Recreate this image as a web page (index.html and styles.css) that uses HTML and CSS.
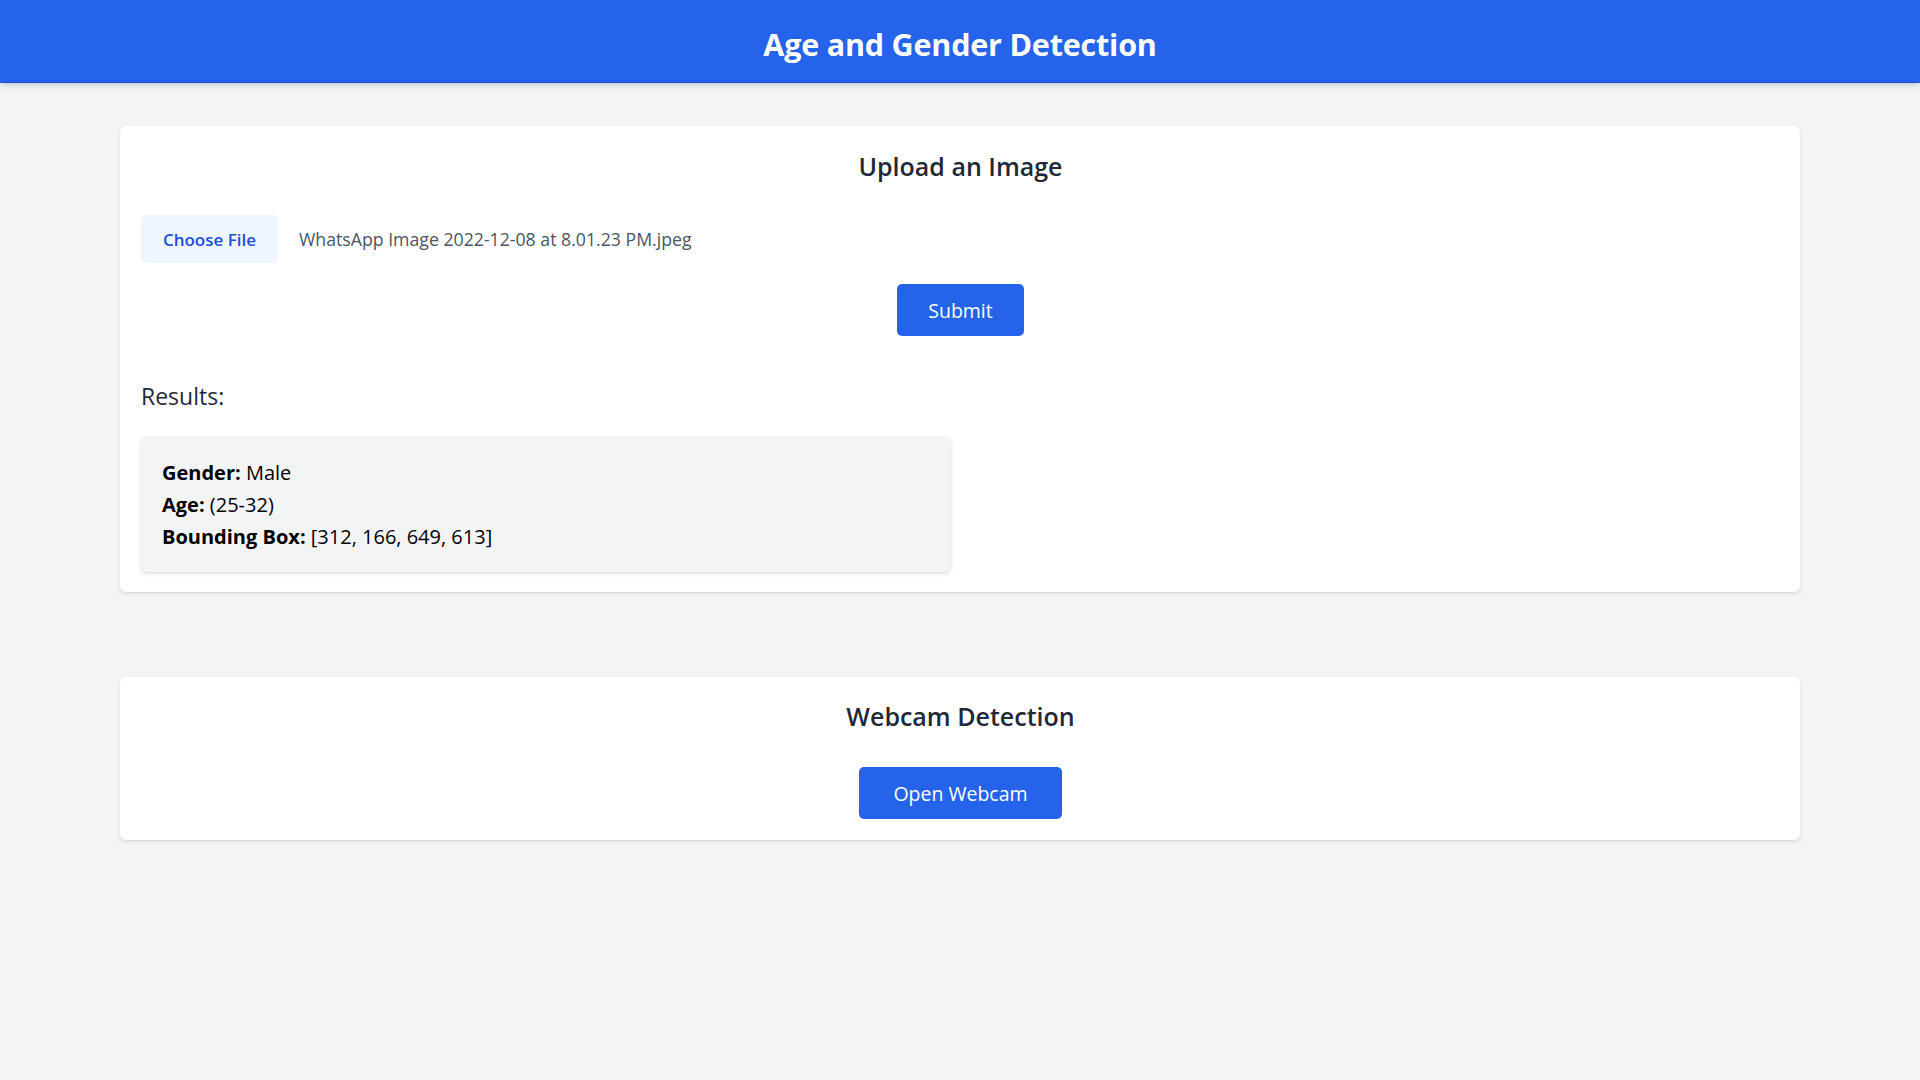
FILE: index.html
```html
<!DOCTYPE html>
<html lang="en">
<head>
<meta charset="utf-8">
<title>Age and Gender Detection</title>
<link rel="stylesheet" href="styles.css">
</head>
<body>
<header class="topbar">
  <h1 class="topbar-title">Age and Gender Detection</h1>
</header>
<main class="container">
  <section class="card">
    <h2 class="card-title">Upload an Image</h2>
    <div class="file-row">
      <span class="file-button">Choose File</span>
      <span class="file-name">WhatsApp Image 2022-12-08 at 8.01.23 PM.jpeg</span>
    </div>
    <div class="center">
      <button class="btn">Submit</button>
    </div>
    <h3 class="results-title">Results:</h3>
    <div class="results-box">
      <p class="result-line"><strong>Gender:</strong> Male</p>
      <p class="result-line"><strong>Age:</strong> (25-32)</p>
      <p class="result-line"><strong>Bounding Box:</strong> [312, 166, 649, 613]</p>
    </div>
  </section>
  <section class="card card-webcam">
    <h2 class="card-title">Webcam Detection</h2>
    <div class="center">
      <button class="btn btn-wide">Open Webcam</button>
    </div>
  </section>
</main>
</body>
</html>
```
FILE: styles.css
```css
* { box-sizing: border-box; }
html, body {
  margin: 0;
  padding: 0;
}
body {
  background: #f3f4f6;
  font-family: "Open Sans", "Noto Sans", sans-serif;
  color: #1f2937;
  min-height: 1080px;
}
.topbar {
  background: #2563eb;
  height: 83px;
  padding-top: 5px;
  border-bottom: 1px solid #1d4ed8;
  box-shadow: 0 4px 6px -1px rgba(0,0,0,0.12), 0 2px 4px -2px rgba(0,0,0,0.1);
  display: flex;
  align-items: center;
  justify-content: center;
}
.topbar-title {
  margin: 0;
  color: #ffffff;
  font-size: 30.5px;
  font-weight: 700;
  line-height: 40px;
  letter-spacing: -0.2px;
}
.container {
  width: 1680px;
  margin: 0 auto;
  padding-top: 43px;
}
.card {
  background: #ffffff;
  border-radius: 6px;
  box-shadow: 0 2px 5px rgba(0,0,0,0.08), 0 1px 2px rgba(0,0,0,0.06);
  padding: 20px 20px 20px 21px;
}
.card-webcam {
  margin-top: 85px;
  padding-bottom: 21px;
}
.card-title {
  margin: 2px 0 31px 0;
  text-align: center;
  font-size: 25px;
  line-height: 36px;
  font-weight: 600;
  color: #1f2937;
}
.card-webcam .card-title {
  margin-top: 1px;
  margin-bottom: 33px;
}
.file-row {
  display: flex;
  align-items: center;
  height: 48px;
}
.file-button {
  display: inline-flex;
  align-items: center;
  justify-content: center;
  height: 48px;
  width: 137px;
  background: #eff6ff;
  color: #1d4ed8;
  border-radius: 5px;
  font-size: 17px;
  font-weight: 600;
  margin-right: 21px;
}
.file-name {
  font-size: 17.7px;
  color: #4b5563;
}
.center {
  display: flex;
  justify-content: center;
  margin-top: 21px;
}
.card-webcam .center {
  margin-top: 0;
}
.btn {
  height: 52px;
  padding: 0 31px;
  background: #2563eb;
  color: #ffffff;
  border: 0;
  border-radius: 5px;
  font-family: inherit;
  font-size: 19.5px;
  font-weight: 400;
}
.btn-wide {
  padding: 0 34px;
}
.results-title {
  margin: 44px 0 24px 0;
  font-size: 23px;
  line-height: 32px;
  font-weight: 500;
  color: #1f2937;
}
.results-box {
  width: 810px;
  background: #f3f4f6;
  border-radius: 6px;
  box-shadow: 0 2px 4px rgba(0,0,0,0.1), 0 1px 2px rgba(0,0,0,0.06);
  padding: 21px 21px 19px 21px;
}
.result-line {
  margin: 0;
  font-size: 20px;
  line-height: 32px;
  color: #000000;
}
.result-line strong {
  font-weight: 700;
}
```
